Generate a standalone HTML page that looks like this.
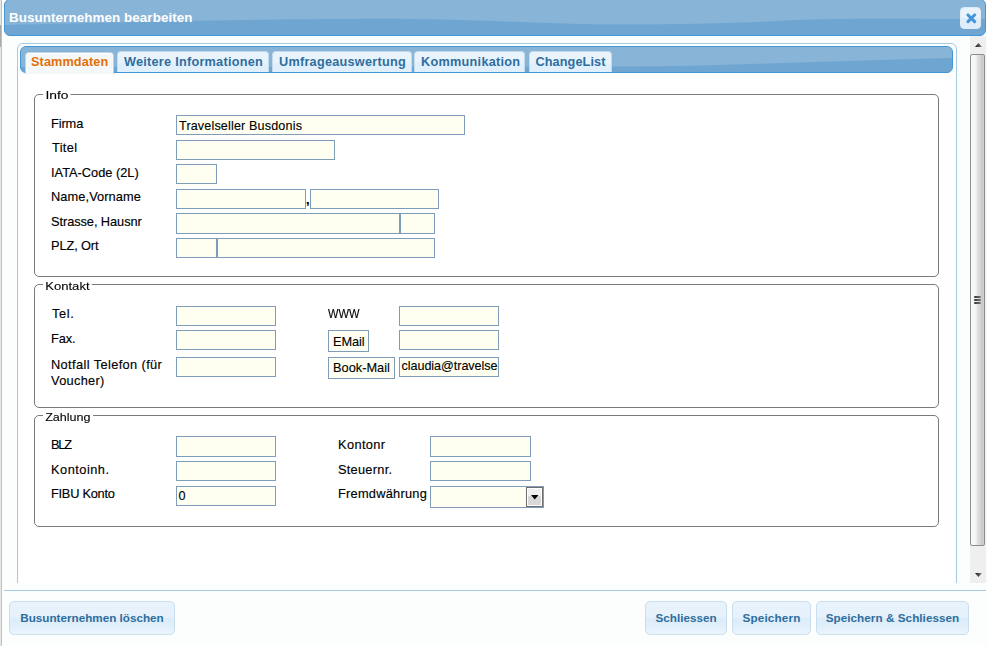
<!DOCTYPE html>
<html><head><meta charset="utf-8">
<style>
*{box-sizing:border-box;margin:0;padding:0}
html,body{width:987px;height:646px;overflow:hidden;background:#fcfdfd;font-family:"Liberation Sans",sans-serif;color:#222}
.a{position:absolute}
#edge0{left:0;top:0;width:1px;height:646px;background:#e6e6e6}
#edge0b{left:0;top:25px;width:1px;height:22px;background:#a9a9a9}
#edge1{left:1px;top:0;width:1px;height:646px;background:#a6c9e2}
#title{left:4px;top:-1px;width:982px;height:37px;border:1px solid #4297d7;border-radius:6px;overflow:hidden;background:#6fa5d1}
#title svg{position:absolute;left:0;top:0}
#ttext{left:9px;top:10px;color:#fff;font-weight:bold;font-size:13.4px;line-height:15px;letter-spacing:0.08px;white-space:nowrap}
#close{left:960px;top:7px;width:21px;height:22px;border-radius:4px;background:linear-gradient(#eaf3fc 0 50%,#deedfa 50% 100%);border:1px solid #dfecf7}
#panel{left:17px;top:43px;width:940px;height:620px;border:1px solid #a6c9e2;border-radius:6px;background:#fcfdfd}
#nav{left:20px;top:46px;width:933px;height:27px;border:1px solid #4297d7;border-radius:6px;overflow:hidden;background:#6fa5d1}
.tab{position:absolute;top:51px;height:21px;border:1px solid #c5dbec;border-bottom:0;border-radius:4px 4px 0 0;background:linear-gradient(#e9f3fc 0 55%,#dfeffc 55% 100%);color:#2e6e9e;font-weight:bold;font-size:12.7px;white-space:nowrap;line-height:14px;padding-top:3px}
.tab.act{top:52px;height:22px;padding-top:2px;background:#f5f8f9;border-color:#b9d5ec;box-shadow:inset 0 1px 0 #fff;color:#e17009}
.fs{position:absolute;border:1px solid #7a7a7a;border-radius:5px}
.leg{position:absolute;font-size:11.5px;line-height:14px;letter-spacing:0.5px;background:#fff;padding:0 2px 0 2px;white-space:nowrap;color:#000;-webkit-text-stroke:0.1px #000}
.lab{position:absolute;font-size:12.8px;line-height:16px;white-space:nowrap;color:#000;-webkit-text-stroke:0.15px #000}
.inp{position:absolute;height:20px;border:1px solid #7f9db9;background:#fefff0;font-size:12.6px;line-height:16px;padding:1px 0 0 2px;white-space:nowrap;overflow:hidden;color:#000;-webkit-text-stroke:0.12px #000}
.btn2{position:absolute;height:22px;border:1px solid #7f9db9;background:#fefff0;font-size:12.8px;line-height:16px;padding:2px 0 0 4px;white-space:nowrap;color:#000;-webkit-text-stroke:0.12px #000}
.btn{position:absolute;height:34px;border:1px solid #c9deee;border-radius:5px;background:linear-gradient(#e9f3fc 0,#e6f1fb 48%,#dcecf9 50%,#e0eefa 70%,#eaf4fd 100%);color:#2e6e9e;font-weight:bold;font-size:11.7px;text-align:center;line-height:32px;white-space:nowrap}
#sb{left:970px;top:36px;width:16px;height:547px;background:#efefef}
#thumb{left:970px;top:54px;width:15px;height:492px;border:1px solid #8c8c8c;border-radius:2px;background:linear-gradient(90deg,#fafafa,#f2f2f2 40%,#e2e2e4 50%,#c9c9cd 88%,#d4d4d6)}
#sep{left:4px;top:590px;width:982px;height:1px;background:#a6c9e2}
</style></head><body>
<div class="a" id="edge0"></div><div class="a" id="edge0b"></div>
<div class="a" id="edge1"></div>

<div class="a" id="title">
<svg width="982" height="37" viewBox="0 0 982 37"><defs><filter id="bl" x="-1%" y="-50%" width="102%" height="200%"><feGaussianBlur stdDeviation="0.7"/></filter></defs><path filter="url(#bl)" d="M0 0 H982 V19 C900 19 840 18 790 20 C720 24 640 25 576 24 C480 21 420 18 346 19 C260 19 120 22 0 25 Z" fill="#88b4d8"/></svg>
</div>
<div class="a" id="ttext">Busunternehmen bearbeiten</div>
<div class="a" id="close"><svg class="a" style="left:5px;top:5px" width="11" height="11" viewBox="0 0 11 11"><path d="M2 2 L8.6 8.6 M8.6 2 L2 8.6" stroke="#4596d9" stroke-width="3.1" stroke-linecap="round"/></svg></div>

<div class="a" id="panel"></div>
<div class="a" style="left:20px;top:74px;width:933px;height:510px;background:#fff"></div>
<div class="a" id="nav">
<svg width="933" height="27" viewBox="0 0 933 27"><path filter="url(#bl)" d="M0 0 H933 V11 C850 13 760 16 680 18.5 C640 19.5 610 20 0 20 Z" fill="#88b4d8"/></svg>
</div>
<div class="tab act" style="left:25px;width:89px;padding-left:5px;letter-spacing:0.11px">Stammdaten</div>
<div class="tab" style="left:117px;width:152px;padding-left:6px;letter-spacing:0.25px">Weitere Informationen</div>
<div class="tab" style="left:272px;width:140px;padding-left:6px;letter-spacing:0.25px">Umfrageauswertung</div>
<div class="tab" style="left:414px;width:111px;padding-left:6px;letter-spacing:0.27px">Kommunikation</div>
<div class="tab" style="left:529px;width:83px;padding-left:5.5px;letter-spacing:0.1px">ChangeList</div>

<!-- Info -->
<div class="fs" style="left:34px;top:94px;width:905px;height:183px"></div>
<div class="leg" style="left:43px;top:88px;letter-spacing:0;transform:scaleX(1.2);transform-origin:0 0">Info</div>
<div class="lab" style="left:51px;top:116px;letter-spacing:-0.1px">Firma</div>
<div class="lab" style="left:52px;top:140px;letter-spacing:0.32px">Titel</div>
<div class="lab" style="left:51px;top:165px">IATA-Code (2L)</div>
<div class="lab" style="left:51px;top:189px;letter-spacing:0.09px">Name,Vorname</div>
<div class="lab" style="left:51px;top:214px;letter-spacing:-0.07px">Strasse, Hausnr</div>
<div class="lab" style="left:51px;top:238px;letter-spacing:-0.11px">PLZ, Ort</div>
<div class="inp" style="left:176px;top:115px;width:289px;padding-top:2px;letter-spacing:0.15px">Travelseller Busdonis</div>
<div class="inp" style="left:176px;top:140px;width:159px"></div>
<div class="inp" style="left:176px;top:164px;width:41px"></div>
<div class="inp" style="left:176px;top:189px;width:130px"></div>
<div class="lab" style="left:306px;top:192px;font-weight:bold">,</div>
<div class="inp" style="left:310px;top:189px;width:129px"></div>
<div class="inp" style="left:176px;top:213px;width:224px;height:21px"></div>
<div class="inp" style="left:400px;top:213px;width:35px;height:21px"></div>
<div class="inp" style="left:176px;top:238px;width:41px"></div>
<div class="inp" style="left:217px;top:238px;width:218px"></div>

<!-- Kontakt -->
<div class="fs" style="left:34px;top:284px;width:905px;height:124px"></div>
<div class="leg" style="left:43px;top:279px;letter-spacing:0;transform:scaleX(1.135);transform-origin:0 0">Kontakt</div>
<div class="lab" style="left:52px;top:306px;letter-spacing:0.67px">Tel.</div>
<div class="lab" style="left:51px;top:331px;letter-spacing:-0.07px">Fax.</div>
<div class="lab" style="left:51px;top:357px"><span style="letter-spacing:0.38px">Notfall Telefon (für</span><br><span style="letter-spacing:0.3px">Voucher)</span></div>
<div class="inp" style="left:176px;top:306px;width:100px"></div>
<div class="inp" style="left:176px;top:330px;width:100px"></div>
<div class="inp" style="left:176px;top:357px;width:100px"></div>
<div class="lab" style="left:328px;top:306px;transform:scaleX(0.87);transform-origin:0 0">WWW</div>
<div class="inp" style="left:399px;top:306px;width:100px"></div>
<div class="btn2" style="left:328px;top:330px;width:41px;letter-spacing:-0.1px;padding-top:3px">EMail</div>
<div class="inp" style="left:399px;top:330px;width:100px"></div>
<div class="btn2" style="left:328px;top:357px;width:67px">Book-Mail</div>
<div class="inp" style="left:399px;top:357px;width:100px;padding-left:1.5px;padding-top:0;letter-spacing:-0.05px">claudia@travelseller</div>

<!-- Zahlung -->
<div class="fs" style="left:34px;top:415px;width:905px;height:112px"></div>
<div class="leg" style="left:43px;top:410px;letter-spacing:0;transform:scaleX(1.09);transform-origin:0 0">Zahlung</div>
<div class="lab" style="left:51px;top:437px;letter-spacing:-1.2px">BLZ</div>
<div class="lab" style="left:51px;top:462px;letter-spacing:0.49px">Kontoinh.</div>
<div class="lab" style="left:51px;top:486px;letter-spacing:-0.26px">FIBU Konto</div>
<div class="inp" style="left:176px;top:436px;width:100px;height:21px"></div>
<div class="inp" style="left:176px;top:461px;width:100px"></div>
<div class="inp" style="left:176px;top:486px;width:100px;padding-left:1.5px">0</div>
<div class="lab" style="left:338px;top:437px;letter-spacing:0.37px">Kontonr</div>
<div class="lab" style="left:338px;top:462px;letter-spacing:0.26px">Steuernr.</div>
<div class="lab" style="left:338px;top:486px;letter-spacing:0.25px">Fremdwährung</div>
<div class="inp" style="left:430px;top:436px;width:101px;height:21px"></div>
<div class="inp" style="left:430px;top:461px;width:101px"></div>
<div class="inp" style="left:430px;top:486px;width:114px;height:22px"></div>
<div class="a" style="left:526px;top:487px;width:17px;height:20px;border:1px solid #6e6e6e;background:#fff;padding:1px">
  <div style="width:13px;height:16px;background:linear-gradient(#f0f0f0 0 45%,#d9d9d9 45% 100%)"></div>
  <svg class="a" style="left:4px;top:7px" width="8" height="5" viewBox="0 0 8 5"><path d="M0 0 H7.5 L3.75 4.5 Z" fill="#000"/></svg>
</div>

<div class="a" id="sb"></div>
<svg class="a" style="left:974px;top:42px" width="9" height="6" viewBox="0 0 9 6"><defs><linearGradient id="ag" x1="0" x2="1"><stop offset="0" stop-color="#111"/><stop offset="1" stop-color="#888"/></linearGradient></defs><path d="M1 5 L4.5 1 L8 5 Z" fill="url(#ag)"/></svg>
<svg class="a" style="left:974px;top:572px" width="9" height="6" viewBox="0 0 9 6"><path d="M1 1 L8 1 L4.5 5 Z" fill="url(#ag)"/></svg>
<div class="a" id="thumb"></div>
<div class="a" style="left:974px;top:296px;width:7px;height:2px;background:linear-gradient(90deg,#333,#777);border-radius:1px"></div>
<div class="a" style="left:974px;top:299px;width:7px;height:2px;background:linear-gradient(90deg,#333,#777);border-radius:1px"></div>
<div class="a" style="left:974px;top:302px;width:7px;height:2px;background:linear-gradient(90deg,#333,#777);border-radius:1px"></div>
<div class="a" style="left:2px;top:583px;width:985px;height:63px;background:#fcfdfd"></div>
<div class="a" id="sep"></div>

<div class="btn" style="left:9px;top:601px;width:166px">Busunternehmen löschen</div>
<div class="btn" style="left:645px;top:601px;width:82px">Schliessen</div>
<div class="btn" style="left:732px;top:601px;width:79px;letter-spacing:0.15px">Speichern</div>
<div class="btn" style="left:816px;top:601px;width:153px;letter-spacing:0.05px">Speichern &amp; Schliessen</div>
</body></html>
